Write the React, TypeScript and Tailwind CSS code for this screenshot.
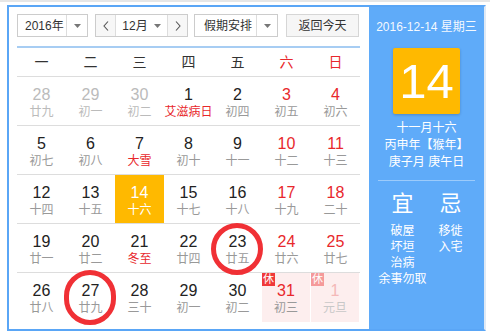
import React from "react";

type Day = {
  n: number;
  lunar: string;
  muted?: boolean;
  red?: boolean;
  lunarRed?: boolean;
  today?: boolean;
  rest?: boolean;
};

const WEEK = ["一", "二", "三", "四", "五", "六", "日"];

const ROWS: Day[][] = [
  [
    { n: 28, lunar: "廿九", muted: true },
    { n: 29, lunar: "初一", muted: true },
    { n: 30, lunar: "初二", muted: true },
    { n: 1, lunar: "艾滋病日", lunarRed: true },
    { n: 2, lunar: "初四" },
    { n: 3, lunar: "初五", red: true },
    { n: 4, lunar: "初六", red: true },
  ],
  [
    { n: 5, lunar: "初七" },
    { n: 6, lunar: "初八" },
    { n: 7, lunar: "大雪", lunarRed: true },
    { n: 8, lunar: "初十" },
    { n: 9, lunar: "十一" },
    { n: 10, lunar: "十二", red: true },
    { n: 11, lunar: "十三", red: true },
  ],
  [
    { n: 12, lunar: "十四" },
    { n: 13, lunar: "十五" },
    { n: 14, lunar: "十六", today: true },
    { n: 15, lunar: "十七" },
    { n: 16, lunar: "十八" },
    { n: 17, lunar: "十九", red: true },
    { n: 18, lunar: "二十", red: true },
  ],
  [
    { n: 19, lunar: "廿一" },
    { n: 20, lunar: "廿二" },
    { n: 21, lunar: "冬至", lunarRed: true },
    { n: 22, lunar: "廿四" },
    { n: 23, lunar: "廿五" },
    { n: 24, lunar: "廿六", red: true },
    { n: 25, lunar: "廿七", red: true },
  ],
  [
    { n: 26, lunar: "廿八" },
    { n: 27, lunar: "廿九" },
    { n: 28, lunar: "三十" },
    { n: 29, lunar: "初一" },
    { n: 30, lunar: "初二" },
    { n: 31, lunar: "初三", red: true, rest: true },
    { n: 1, lunar: "元旦", muted: true, rest: true },
  ],
];

function Caret() {
  return (
    <svg width="7" height="4" viewBox="0 0 7 4" className="fill-[#777]">
      <path d="M0 0h7L3.5 4z" />
    </svg>
  );
}

function Chevron({ dir }: { dir: "left" | "right" }) {
  return (
    <svg width="6" height="10" viewBox="0 0 6 10" fill="none" stroke="#555" strokeWidth="1.1">
      {dir === "left" ? <path d="M5 0.5 1 5l4 4.5" /> : <path d="M1 0.5 5 5l-4 4.5" />}
    </svg>
  );
}

function DayCell({ d }: { d: Day }) {
  let bg = "";
  if (d.today) bg = "bg-[#ffb900]";
  else if (d.rest) bg = "bg-[#fdeeee] mr-px";

  let numColor = "text-[#222]";
  if (d.today) numColor = "text-white";
  else if (d.rest && d.muted) numColor = "text-[#f4b8b8]";
  else if (d.muted) numColor = "text-[#bbb]";
  else if (d.red) numColor = "text-[#e8282c]";

  let lunarColor = "text-[#999]";
  if (d.today) lunarColor = "text-white";
  else if (d.rest && d.muted) lunarColor = "text-[#c8c8c8]";
  else if (d.muted) lunarColor = "text-[#bbb]";
  else if (d.lunarRed) lunarColor = "text-[#e8282c]";

  return (
    <div className={`relative flex flex-col items-center pt-[9px] ${bg}`}>
      {d.rest ? (
        <span
          className={`absolute left-0 top-0 flex h-[13px] w-[13px] items-center justify-center text-[11px] leading-none text-white ${
            d.muted ? "bg-[#f59a9a]" : "bg-[#f0393a]"
          }`}
        >
          休
        </span>
      ) : null}
      <span className={`text-[16px] leading-[18px] ${numColor}`}>{d.n}</span>
      <span className={`whitespace-nowrap text-[12px] leading-[16px] ${lunarColor}`}>
        {d.lunar}
      </span>
    </div>
  );
}

export default function App() {
  return (
    <div
      className="h-[335px] w-[490px] overflow-hidden bg-white"
      style={{ fontFamily: '"Liberation Sans", "Noto Sans CJK SC", sans-serif' }}
    >
      <div className="h-[2px] bg-[#e6e6e6]" />
      <div className="ml-[7px] mt-[3px] flex h-[326px] w-[479px] border-2 border-[#5aa6f6] border-r-[#dfe9f5]">
        {/* calendar */}
        <div className="relative w-[360px] pl-[8px] pt-[7px]">
          <div className="flex h-[23px] w-[343px] items-stretch whitespace-nowrap text-[12px] text-[#333]">
            <div className="flex w-[71px] border border-[#ccc] bg-white">
              <span className="flex flex-1 items-center pl-[7px]">2016年</span>
              <span className="flex w-[21px] items-center justify-center border-l border-[#ddd]">
                <Caret />
              </span>
            </div>
            <div className="ml-[7px] flex w-[93px] border border-[#ccc] bg-white">
              <span className="flex w-[20px] items-center justify-center border-r border-[#ddd] bg-[#f7f7f7]">
                <Chevron dir="left" />
              </span>
              <span className="flex flex-1 items-center justify-center gap-[6px]">
                12月
                <Caret />
              </span>
              <span className="flex w-[20px] items-center justify-center border-l border-[#ddd] bg-[#f7f7f7]">
                <Chevron dir="right" />
              </span>
            </div>
            <div className="ml-[6px] flex w-[84px] border border-[#ccc] bg-white">
              <span className="flex flex-1 items-center pl-[9px]">假期安排</span>
              <span className="flex w-[21px] items-center justify-center border-l border-[#ddd]">
                <Caret />
              </span>
            </div>
            <button className="ml-[8px] flex w-[73px] items-center justify-center border border-[#d6d6d6] bg-[#f6f6f6] text-[12px] text-[#333]">
              返回今天
            </button>
          </div>

          <div className="mt-[9px] h-[2px] w-[343px] bg-[#a7cdf3]" />

          <div className="grid h-[29px] w-[343px] grid-cols-7 border-b border-[#ddd] text-[14px]">
            {WEEK.map((w, i) => (
              <div
                key={w}
                className={`flex items-center justify-center ${i >= 5 ? "text-[#e8282c]" : "text-[#333]"}`}
              >
                {w}
              </div>
            ))}
          </div>

          <div className="w-[343px]">
            {ROWS.map((row, ri) => (
              <div
                key={ri}
                className={`grid h-[49px] grid-cols-7 ${ri < ROWS.length - 1 ? "border-b border-[#ddd]" : ""}`}
              >
                {row.map((d, ci) => (
                  <DayCell key={ci} d={d} />
                ))}
              </div>
            ))}
          </div>

          {/* hand-drawn marks */}
          <span className="pointer-events-none absolute left-[202px] top-[216px] h-[52px] w-[52px] rounded-full border-[5px] border-[#f03035]" />
          <span className="pointer-events-none absolute left-[55px] top-[263px] h-[55px] w-[52px] rounded-full border-[5px] border-[#f03035]" />
        </div>

        {/* detail panel */}
        <div className="flex w-[115px] flex-col items-center bg-[#5fabf9] text-white">
          <div className="mt-[12px] whitespace-nowrap text-[12px] leading-[16px] text-white/95">
            2016-12-14 星期三
          </div>
          <div className="mt-[13px] flex h-[66px] w-[67px] items-center justify-center rounded-[2px] bg-[#ffb900] text-[49px] leading-none shadow-[0_1px_3px_rgba(0,0,0,0.2)]">
            14
          </div>
          <div className="mt-[6px] text-center text-[12px] leading-[17px]">
            <div>十一月十六</div>
            <div>丙申年【猴年】</div>
            <div>庚子月 庚午日</div>
          </div>
          <div className="mt-[9px] h-px w-[97px] bg-[#9ccbfb]" />
          <div className="mt-[10px] grid w-[96px] grid-cols-2 text-[12px] leading-[16px]">
            <div className="flex flex-col items-center">
              <span className="mb-[6px] text-[22px] leading-[26px]">宜</span>
              <span>破屋</span>
              <span>坏垣</span>
              <span>治病</span>
              <span className="whitespace-nowrap">余事勿取</span>
            </div>
            <div className="flex flex-col items-center">
              <span className="mb-[6px] text-[22px] leading-[26px]">忌</span>
              <span>移徙</span>
              <span>入宅</span>
            </div>
          </div>
        </div>
      </div>
    </div>
  );
}
